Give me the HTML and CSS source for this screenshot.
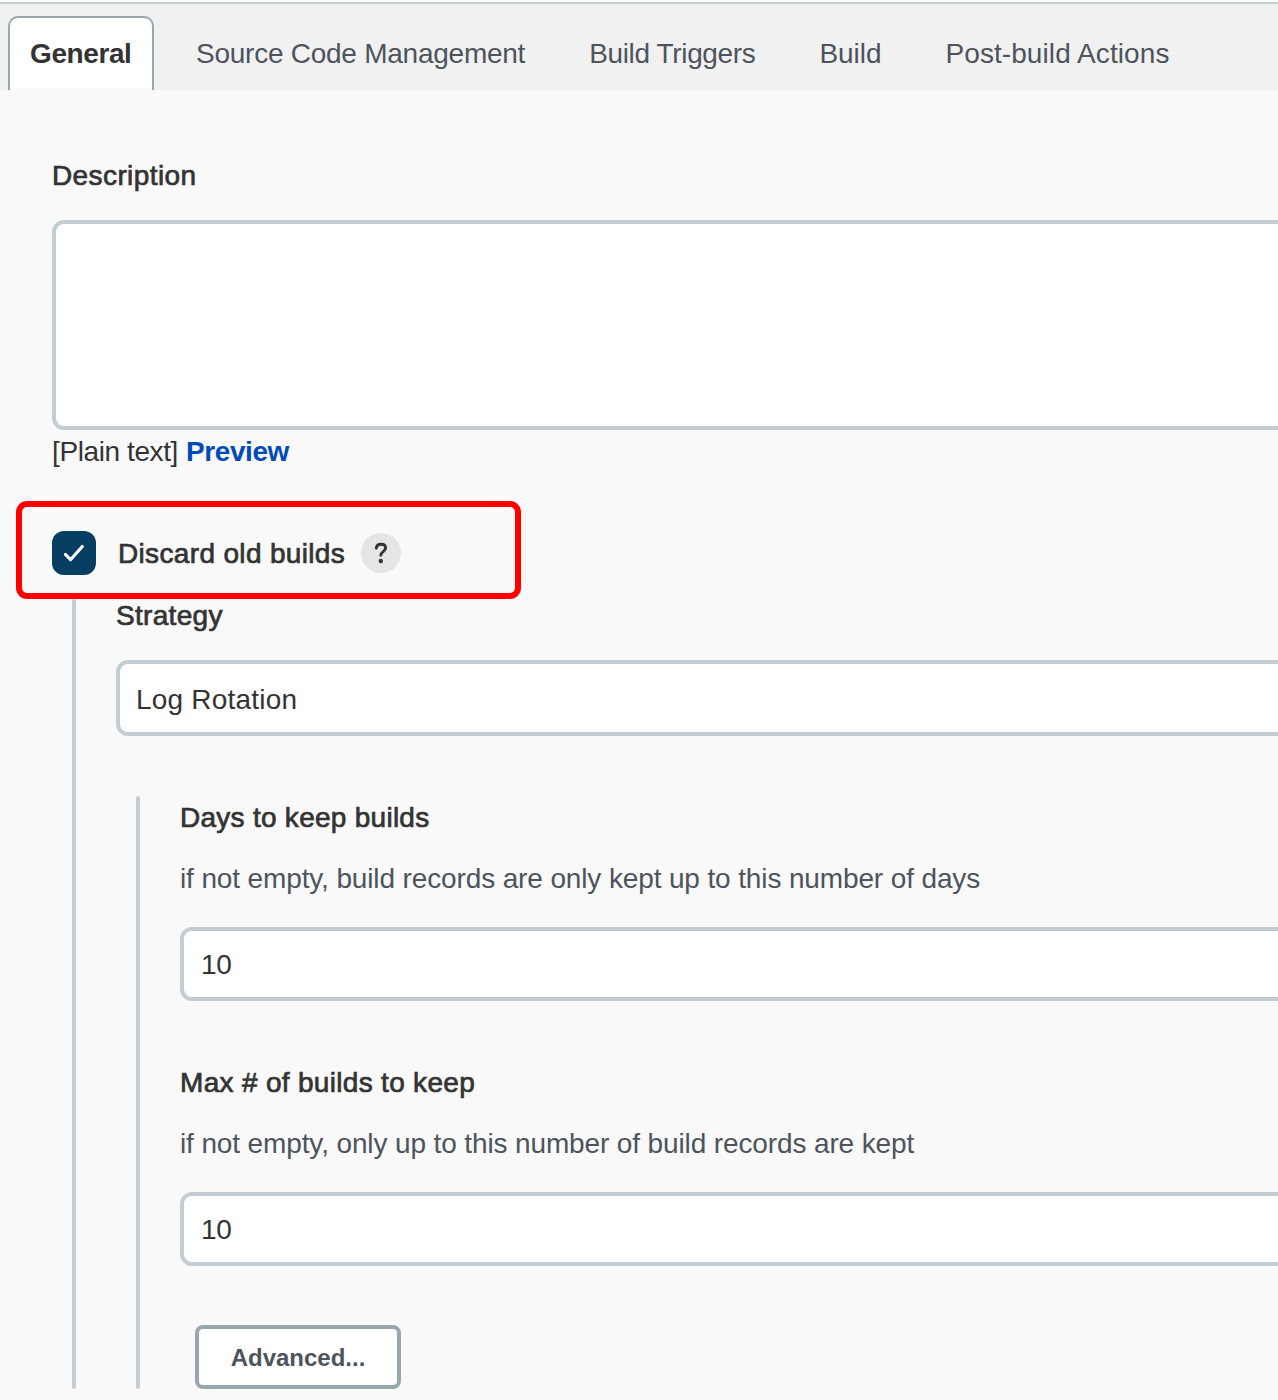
FILE: index.html
```html
<!DOCTYPE html>
<html lang="en">
<head>
<meta charset="utf-8">
<title>Job configuration</title>
<link rel="stylesheet" href="styles.css">
</head>
<body>
<nav class="tabs">
  <a class="tab tab-active"><span class="t-general">General</span></a>
  <a class="tab"><span class="t-scm">Source Code Management</span></a>
  <a class="tab"><span class="t-triggers">Build Triggers</span></a>
  <a class="tab"><span class="t-build">Build</span></a>
  <a class="tab"><span class="t-post">Post-build Actions</span></a>
</nav>
<main class="form">
  <div class="label"><span class="l-desc">Description</span></div>
  <div class="field textarea"></div>
  <div class="format"><span class="plain">[Plain text]</span><a class="preview">Preview</a></div>
  <div class="check-row">
    <span class="checkbox"><svg width="44" height="44" viewBox="0 0 44 44"><path d="M13.5 23.5 18.5 28.7 30.3 15.5" fill="none" stroke="#fff" stroke-width="3.2" stroke-linecap="round" stroke-linejoin="round"/></svg></span>
    <span class="label l-discard">Discard old builds</span>
    <span class="help"><svg width="40" height="40" viewBox="0 0 40 40"><path d="M15.3 15.2C15.6 12.6 17.4 11.3 20 11.3c2.8 0 4.6 1.4 4.6 3.8 0 3.4-4.8 3.6-4.8 7.2" fill="none" stroke="#333" stroke-width="2.9" stroke-linecap="round"/><circle cx="19.8" cy="28" r="2.2" fill="#333"/></svg></span>
    <div class="highlight"></div>
  </div>
  <section class="group outer">
    <div class="label"><span class="l-strategy">Strategy</span></div>
    <div class="field select"><span class="v-log">Log Rotation</span></div>
    <section class="group inner">
      <div class="label"><span class="l-days">Days to keep builds</span></div>
      <div class="hint"><span class="h-days">if not empty, build records are only kept up to this number of days</span></div>
      <div class="field input"><span class="v-num">10</span></div>
      <div class="label second"><span class="l-max">Max # of builds to keep</span></div>
      <div class="hint"><span class="h-max">if not empty, only up to this number of build records are kept</span></div>
      <div class="field input"><span class="v-num">10</span></div>
      <button class="advanced"><span>Advanced...</span></button>
    </section>
  </section>
</main>
</body>
</html>
```
FILE: styles.css
```css
* { box-sizing: border-box; }
html { background: #f9f9f9; }
body {
  margin: 0;
  height: 1400px;
  overflow: hidden;
  background: #f9f9f9;
  color: #333;
  font: 28px/32px "Liberation Sans", Arial, sans-serif;
  white-space: nowrap;
}
.tabs {
  display: flex;
  height: 90px;
  padding: 12px 0 0 8px;
  background: linear-gradient(#fff 2px, #c3ccd1 2px, #c3ccd1 4px, #f1f1f1 4px);
}
.tab {
  padding: 22px 0 0 64px;
  margin-top: 4px;
  color: #4d545d;
}
.tab-active {
  width: 146px;
  padding: 20px 0 0 20px;
  margin-right: -22px;
  border: 2px solid #98a6ae;
  border-bottom: 0;
  border-radius: 10px 10px 0 0;
  background: linear-gradient(#fff 70px, #f9f9f9 70px);
  color: #333;
  font-weight: bold;
}
.t-general { letter-spacing: -0.4px; }
.t-scm { letter-spacing: -0.25px; }
.t-triggers { letter-spacing: -0.35px; }
.t-build { letter-spacing: -0.05px; }
.t-post { letter-spacing: 0.08px; }
.form { padding: 70px 0 0 52px; }
.label { -webkit-text-stroke: 0.7px #333; }
.l-desc { letter-spacing: 0.4px; }
.l-discard { padding-top: 2px; letter-spacing: 0.34px; }
.l-strategy { letter-spacing: 0.3px; }
.l-days { letter-spacing: 0.27px; }
.l-max { letter-spacing: 0.31px; }
.h-days { letter-spacing: -0.13px; }
.h-max { letter-spacing: -0.125px; }
.v-log { letter-spacing: 0.2px; }
.v-num { letter-spacing: -0.3px; }
.field {
  display: flex;
  align-items: center;
  margin-right: -20px;
  border: 4px solid #c3ccd1;
  border-radius: 12px;
  background: #fff;
}
.textarea { height: 210px; margin-top: 28px; }
.format { display: flex; gap: 8px; margin-top: 6px; }
.plain { letter-spacing: -0.4px; }
.preview { color: #004bb8; font-weight: bold; letter-spacing: -0.4px; }
.check-row {
  position: relative;
  display: flex;
  align-items: center;
  height: 44px;
  margin-top: 63px;
}
.checkbox {
  width: 44px;
  height: 44px;
  margin-right: 22px;
  border-radius: 12px;
  background: #063e61;
}
.help {
  width: 40px;
  height: 40px;
  margin-left: 16px;
  border-radius: 50%;
  background: #e5e5e5;
}
.checkbox svg, .help svg { display: block; }
.highlight {
  position: absolute;
  top: -30px;
  left: -36px;
  width: 505px;
  height: 98px;
  border: 6px solid #f00;
  border-radius: 11px;
}
.group { position: relative; padding-left: 44px; }
.group::before {
  content: "";
  position: absolute;
  top: 0;
  bottom: 0;
  left: 0;
  width: 4px;
  border-radius: 2px;
  background: #c3ccd1;
}
.outer { margin: 24px 0 0 20px; padding-top: 1px; height: 790px; }
.inner { margin: 60px 0 0 20px; padding-top: 6px; height: 593px; }
.select { height: 76px; margin-top: 28px; padding: 4px 0 0 16px; }
.hint { margin-top: 29px; color: #4d545d; }
.input { height: 74px; margin-top: 32px; padding: 2px 0 0 17px; }
.second { margin-top: 66px; }
.advanced {
  display: block;
  width: 206px;
  height: 64px;
  margin: 59px 0 0 15px;
  padding: 2px 0 0;
  border: 4px solid #98a6ae;
  border-radius: 8px;
  background: #fff;
  color: #4d545d;
  font: bold 24px/28px "Liberation Sans", Arial, sans-serif;
}
```
